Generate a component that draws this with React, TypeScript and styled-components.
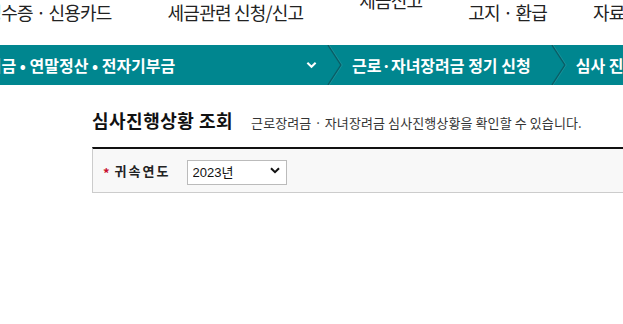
import { useState } from "react";
import styled, { createGlobalStyle } from "styled-components";

const GlobalStyle = createGlobalStyle`
    html, body {
        margin: 0;
        padding: 0;
        background: #fff;
        overflow: hidden;
    }
    body {
        font-family: "Noto Sans CJK KR", "Noto Sans", sans-serif;
        color: #222;
    }
`;

const topMenus = [
    { label: "현금영수증 · 신용카드", gap: 0 },
    { label: "세금관련 신청/신고", gap: 56 },
    { label: "세금신고", gap: 56, raised: true },
    { label: "고지 · 환급", gap: 46 },
    { label: "자료제출", gap: 46 },
];

export default function App() {
    const [year, setYear] = useState("2023");

    return (
        <Page>
            <GlobalStyle />
            <TopNav>
                {topMenus.map((m) => (
                    <TopItem key={m.label} $gap={m.gap} $raised={m.raised}>{m.label}</TopItem>
                ))}
            </TopNav>

            <Breadcrumb>
                <Crumb $first>
                    <span>장려금 • 연말정산 • 전자기부금</span>
                    <ChevronDown />
                </Crumb>
                <Separator />
                <Crumb>근로·자녀장려금 정기 신청</Crumb>
                <Separator />
                <Crumb>심사 진행상황 조회</Crumb>
            </Breadcrumb>

            <Content>
                <TitleRow>
                    <Title>심사진행상황 조회</Title>
                    <Desc>근로장려금 · 자녀장려금 심사진행상황을 확인할 수 있습니다.</Desc>
                </TitleRow>

                <SearchBox>
                    <Required>*</Required>
                    <Label>귀속연도</Label>
                    <SelectWrap>
                        <Select value={year} onChange={(e) => setYear(e.target.value)}>
                            <option value="2023">2023년</option>
                            <option value="2022">2022년</option>
                            <option value="2021">2021년</option>
                        </Select>
                        <SelectArrow viewBox="0 0 10 7">
                            <path d="M1 1.2 L5 5.2 L9 1.2" fill="none" stroke="#111" strokeWidth="2" />
                        </SelectArrow>
                    </SelectWrap>
                </SearchBox>
            </Content>
        </Page>
    );
}

const ChevronDown = () => (
    <ChevronSvg viewBox="0 0 12 8">
        <path d="M1.5 1.5 L6 6 L10.5 1.5" fill="none" stroke="#fff" strokeWidth="2.2" />
    </ChevronSvg>
);

const Separator = () => (
    <SepSvg viewBox="0 0 16 40" preserveAspectRatio="none">
        <polyline points="1,0 14,20 1,40" fill="none" stroke="#0a5e66" strokeWidth="1.4" />
        <polyline points="2.2,0 15.2,20 2.2,40" fill="none" stroke="#2a9aa2" strokeWidth="0.6" />
    </SepSvg>
);

const Page = styled.div`
    width: 623px;
    height: 324px;
    overflow: hidden;
`;

const TopNav = styled.div`
    display: flex;
    align-items: flex-start;
    height: 45px;
    margin-left: -46px;
    white-space: nowrap;
`;

const TopItem = styled.div<{ $gap: number; $raised?: boolean }>`
    font-size: 18px;
    line-height: 24px;
    color: #222;
    letter-spacing: -0.8px;
    margin-left: ${(p) => p.$gap}px;
    margin-top: ${(p) => (p.$raised ? "-12px" : "0")};
`;

const Breadcrumb = styled.div`
    display: flex;
    align-items: stretch;
    height: 40px;
    background: #00868f;
    white-space: nowrap;
`;

const Crumb = styled.div<{ $first?: boolean }>`
    display: flex;
    align-items: center;
    justify-content: space-between;
    flex-shrink: 0;
    color: #fff;
    font-size: 16px;
    font-weight: 700;
    padding: 0 20px 0 9px;
    ${(p) => p.$first && `
        width: 355px;
        margin-left: -28px;
        padding: 0 10px 0 0;
        box-sizing: border-box;
    `}
`;

const ChevronSvg = styled.svg`
    width: 11px;
    height: 8px;
`;

const SepSvg = styled.svg`
    width: 16px;
    height: 40px;
    flex-shrink: 0;
`;

const Content = styled.div`
    padding: 22px 0 0 92px;
`;

const TitleRow = styled.div`
    display: flex;
    align-items: baseline;
    gap: 18px;
    white-space: nowrap;
`;

const Title = styled.h2`
    margin: 0;
    font-size: 18px;
    font-weight: 700;
    color: #111;
    letter-spacing: 0.5px;
`;

const Desc = styled.span`
    font-size: 13px;
    color: #333;
    letter-spacing: 0.1px;
`;

const SearchBox = styled.div`
    display: flex;
    align-items: center;
    margin-top: 14px;
    width: 560px;
    height: 43px;
    background: #f8f8f8;
    border-top: 2px solid #111;
    border-left: 1px solid #ccc;
    border-bottom: 1px solid #ccc;
    padding-left: 10px;
    box-sizing: content-box;
`;

const Required = styled.span`
    color: #c8102e;
    font-size: 13px;
    font-weight: 700;
    margin-right: 5px;
    margin-top: 3px;
`;

const Label = styled.span`
    font-size: 13px;
    font-weight: 700;
    color: #222;
    letter-spacing: 2px;
    width: 72px;
`;

const SelectWrap = styled.div`
    position: relative;
    width: 100px;
    height: 25px;
`;

const Select = styled.select`
    appearance: none;
    width: 100%;
    height: 100%;
    box-sizing: border-box;
    border: 1px solid #bbb;
    background: #fff;
    font-family: "Liberation Sans", "Noto Sans CJK KR", sans-serif;
    font-size: 13px;
    color: #111;
    padding: 0 0 0 5px;
    border-radius: 0;
    outline: none;
`;

const SelectArrow = styled.svg`
    position: absolute;
    right: 7px;
    top: 9px;
    width: 10px;
    height: 7px;
    pointer-events: none;
`;
